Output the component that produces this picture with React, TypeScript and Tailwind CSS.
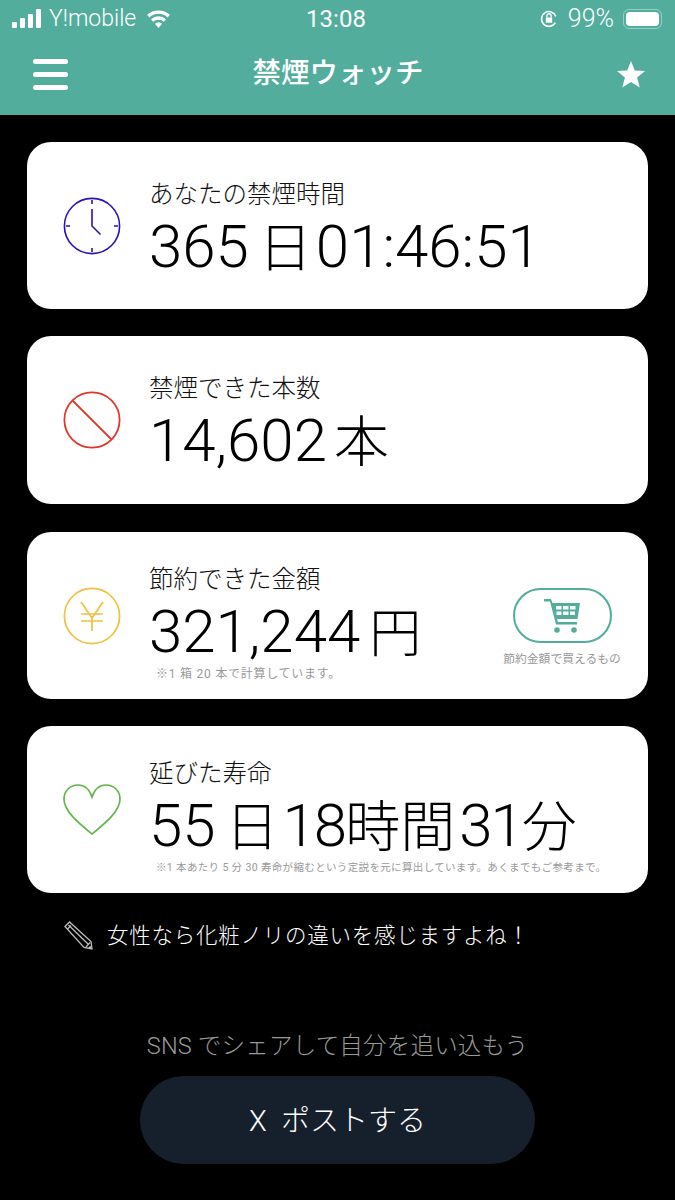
import React from "react";

const jp = { fontFamily: '"Roboto","Noto Sans CJK JP",sans-serif' };

function Clock() {
  return (
    <svg width="58" height="58" viewBox="0 0 58 58" fill="none" stroke="#2a12b8" strokeWidth="1.6">
      <circle cx="29" cy="29" r="27.6" />
      <path d="M29 3v4M29 51v4M3 29h4M51 29h4" />
      <path d="M29 12v17l8.500 8.500" />
    </svg>
  );
}
function Ban() {
  return (
    <svg width="58" height="58" viewBox="0 0 58 58" fill="none" stroke="#dd3a2c" strokeWidth="1.8">
      <circle cx="29" cy="29" r="27.6" />
      <path d="M9.500 9.500l39 39" />
    </svg>
  );
}
function Yen() {
  return (
    <svg width="58" height="58" viewBox="0 0 58 58" fill="none" stroke="#f0c040" strokeWidth="1.7">
      <circle cx="29" cy="29" r="27.6" />
      <path d="M18 15l11 16 11-16M29 31v13M18 27h22M18 34h22" />
    </svg>
  );
}
function Heart() {
  return (
    <svg width="58" height="52" viewBox="0 0 58 52" fill="none" stroke="#62b548" strokeWidth="1.7">
      <path d="M29 50C18 41 1 28 1 15 1 7 7 1 15 1c6 0 11 3 14 12C32 4 37 1 43 1c8 0 14 6 14 14 0 13-17 26-28 35z" />
    </svg>
  );
}
function Cart() {
  return (
    <svg width="37" height="36" viewBox="0 0 37 36" fill="#52ad9c">
      <path d="M0 1h7l1.500 4H36l-2.500 16H13l1 3h19v2.500H12L6 3.500H0z" />
      <circle cx="13" cy="32" r="2.800" />
      <circle cx="30" cy="32" r="2.800" />
      <path fill="#fff" d="M12 8h5.500v3.500H12zM19 8h5.500v3.500H19zM26 8h5.500v3.500H26zM12.500 13.500H17.500V17H12.500zM19 13.500h5.500V17H19zM26 13.500h5V17h-5z" />
    </svg>
  );
}

function Card({
  icon,
  label,
  value,
  note,
  extra,
  cls,
}: {
  icon: React.ReactNode;
  label: string;
  value: React.ReactNode;
  note?: React.ReactNode;
  extra?: React.ReactNode;
  cls: string;
}) {
  return (
    <div className={`relative flex items-center rounded-[24px] bg-white ${cls}`}>
      <div className="flex w-[124px] shrink-0 items-center justify-center pl-[5px]">{icon}</div>
      <div className={`-ml-[2px] flex h-full flex-col ${note ? "pt-[33px]" : "pt-[38px]"}`}>
        <div className="h-[35px] text-[24.500px] leading-[30px] font-light text-[#111]">{label}</div>
        <div className="h-[64px] text-[60px] leading-[64px] font-light text-black whitespace-nowrap">{value}</div>
        {note}
      </div>
      {extra}
    </div>
  );
}

export default function App() {
  return (
    <div className="flex h-[1200px] w-[675px] flex-col overflow-hidden bg-black" style={jp}>
      <header className="h-[115px] shrink-0 bg-[#52ad9c] text-white">
        <div className="flex h-[36px] items-center justify-between pr-[13px] pl-[12px] pt-[1px]">
          <div className="flex w-[200px] items-center gap-[7px]">
            <svg width="30" height="19" viewBox="0 0 30 19" fill="#fff">
              <rect x="0" y="13" width="5" height="6" rx="1" />
              <rect x="8" y="9" width="5" height="10" rx="1" />
              <rect x="16" y="5" width="5" height="14" rx="1" />
              <rect x="24" y="0" width="5" height="19" rx="1" />
            </svg>
            <span className="text-[23px] leading-none font-light">Y!mobile</span>
            <svg width="25" height="18" viewBox="0 0 24 18" fill="#fff" className="ml-[3px]">
              <path d="M12 18l-3.600-4.200a5.400 5.400 0 0 1 7.200 0zM6.700 11.700L4.500 9.200a11 11 0 0 1 15 0l-2.200 2.500a8 8 0 0 0-10.600 0zM2.900 7.400L.6 4.800a17 17 0 0 1 22.800 0l-2.300 2.600a13.500 13.500 0 0 0-18.200 0z" />
            </svg>
          </div>
          <div className="-ml-[2px] text-[24px] leading-none font-normal">13:08</div>
          <div className="flex w-[200px] items-center justify-end gap-[9px]">
            <svg width="18" height="19" viewBox="0 0 16 18" fill="none" stroke="#fff" strokeWidth="1.500" className="mr-[1px]">
              <path d="M14.500 7A7 7 0 1 0 14 13" />
              <rect x="5" y="8" width="6" height="5" fill="#fff" stroke="none" />
              <path d="M6 8V6.500a2 2 0 0 1 4 0V8" strokeWidth="1.200" />
            </svg>
            <span className="text-[25px] leading-none font-light">99%</span>
            <div className="flex h-[20px] w-[39px] items-center rounded-[6px] border border-white/40 p-[2px]">
              <div className="h-full w-full rounded-[4px] bg-white" />
            </div>
          </div>
        </div>
        <div className="flex h-[79px] items-center justify-between pr-[30px] pl-[33px] pb-[2px]">
          <div className="flex w-[35px] flex-col gap-[8px]">
            <div className="h-[5px] rounded-full bg-white" />
            <div className="h-[5px] rounded-full bg-white" />
            <div className="h-[5px] rounded-full bg-white" />
          </div>
          <div className="mr-[9px] text-[28.500px] leading-none font-medium">禁煙ウォッチ</div>
          <svg width="28" height="27" viewBox="0 0 28 27" fill="#fff">
            <path d="M14 0l3.800 9.500 10.200.6-7.900 6.500 2.600 10L14 21l-8.700 5.600 2.600-10L0 10.100l10.200-.6z" />
          </svg>
        </div>
      </header>

      <main className="flex flex-col px-[27px]">
        <Card
          cls="mt-[27px] h-[167px]"
          icon={<Clock />}
          label="あなたの禁煙時間"
          value={<>365<span className="mr-[4px] ml-[10px] text-[53px]">日</span>01:46:51</>}
        />
        <Card
          cls="mt-[27px] h-[168px]"
          icon={<Ban />}
          label="禁煙できた本数"
          value={<>14,602<span className="ml-[7px] text-[55px]">本</span></>}
        />
        <Card
          cls="mt-[28px] h-[167px]"
          icon={<Yen />}
          label="節約できた金額"
          value={<>321,244<span className="ml-[9px] text-[52px]">円</span></>}
          note={<div className="mt-[3px] ml-[7px] text-[12px] leading-[14px] tracking-[0.75px] text-[#999] whitespace-nowrap">※1 箱 20 本で計算しています。</div>}
          extra={
            <div className="absolute top-[56px] right-[25px] flex w-[122px] flex-col items-center">
              <div className="flex h-[55px] w-[99px] items-center justify-center rounded-full border-2 border-[#52ad9c]">
                <Cart />
              </div>
              <div className="mt-[9px] text-[11.800px] leading-[14px] text-[#999] whitespace-nowrap">節約金額で買えるもの</div>
            </div>
          }
        />
        <Card
          cls="mt-[27px] h-[167px]"
          icon={<Heart />}
          label="延びた寿命"
          value={
            <>
              55
              <span className="mr-[4px] ml-[10px] text-[53px]">日</span>
              <span className="tracking-[-2px]">18</span>
              <span className="mr-[4px] text-[55px]">時間</span>
              <span className="tracking-[-2px]">31</span>
              <span className="text-[55px]">分</span>
            </>
          }
          note={<div className="mt-[3px] ml-[7px] text-[10.500px] leading-[14px] tracking-[0.35px] text-[#999] whitespace-nowrap">※1 本あたり 5 分 30 寿命が縮むという定説を元に算出しています。あくまでもご参考まで。</div>}
        />
      </main>

      <div className="mt-[28px] flex items-center pl-[64px] text-white">
        <svg width="29" height="29" viewBox="0 0 29 29" fill="none" stroke="#bbb" strokeWidth="1.300">
          <path d="M1 5.500L5.500 1 27 20.500 28 28 20 26.500zM3 8.500l4-4 M4.500 4L24 23" />
          <path d="M22 26l4-4.500" />
          <path d="M25 27.500l2-2" strokeWidth="2" />
        </svg>
        <span className="ml-[14px] text-[21.500px] leading-[28px] font-light tracking-[0.75px]">女性なら化粧ノリの違いを感じますよね！</span>
      </div>

      <div className="mt-[81px] text-center text-[23.500px] leading-[30px] font-light tracking-[0.2px] text-[#999]">SNS でシェアして自分を追い込もう</div>
      <div className="mt-[15px] flex justify-center">
        <div className="flex h-[88px] w-[395px] items-center justify-center rounded-full bg-[#16202c] pt-[4px] text-[29px] font-light text-white">
          X&nbsp;&nbsp;ポストする
        </div>
      </div>
    </div>
  );
}
